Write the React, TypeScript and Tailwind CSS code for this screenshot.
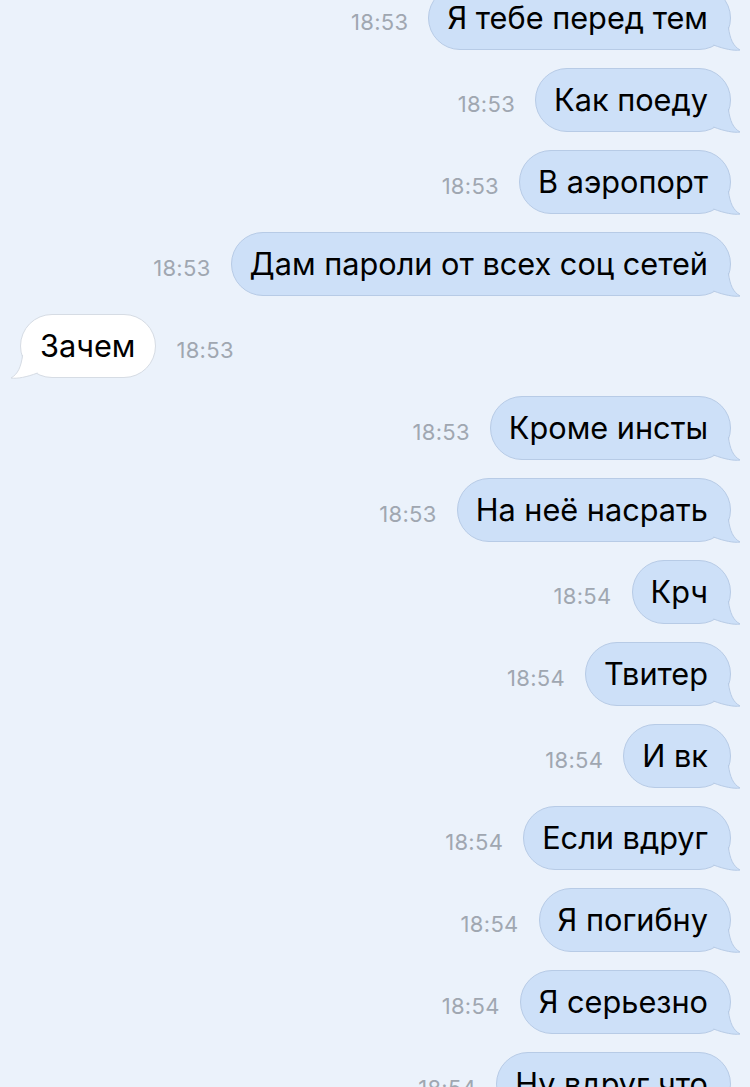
import React from "react";

type Msg = { text: string; time: string; out: boolean };

const MESSAGES: Msg[] = [
  { text: "Я тебе перед тем", time: "18:53", out: true },
  { text: "Как поеду", time: "18:53", out: true },
  { text: "В аэропорт", time: "18:53", out: true },
  { text: "Дам пароли от всех соц сетей", time: "18:53", out: true },
  { text: "Зачем", time: "18:53", out: false },
  { text: "Кроме инсты", time: "18:53", out: true },
  { text: "На неё насрать", time: "18:53", out: true },
  { text: "Крч", time: "18:54", out: true },
  { text: "Твитер", time: "18:54", out: true },
  { text: "И вк", time: "18:54", out: true },
  { text: "Если вдруг", time: "18:54", out: true },
  { text: "Я погибну", time: "18:54", out: true },
  { text: "Я серьезно", time: "18:54", out: true },
  { text: "Ну вдруг что", time: "18:54", out: true },
];

function Tail({ fill, stroke, left }: { fill: string; stroke: string; left?: boolean }) {
  return (
    <svg
      viewBox="-32 -32 44 36"
      className={
        left
          ? "absolute left-[-12px] bottom-[-4px] w-[44px] h-[36px] -scale-x-100"
          : "absolute right-[-12px] bottom-[-4px] w-[44px] h-[36px]"
      }
    >
      <path d="M-2,-22 C0,-10 3,-3 10,1 C4,2 -6,0 -16,-4 L-20,-20 Z" fill={fill} />
      <path
        d="M-1.6,-22 C0,-10 3,-3 10,1 C4,2 -6,0 -16.5,-4"
        fill="none"
        stroke={stroke}
        strokeWidth="1"
      />
    </svg>
  );
}

function Time({ t }: { t: string }) {
  return (
    <span className="mt-[9px] text-[22px] text-[#a0a7b1] font-['Inter',sans-serif] tracking-[0.3px]">
      {t}
    </span>
  );
}

function Row({ m }: { m: Msg }) {
  if (m.out) {
    return (
      <div className="h-[64px] shrink-0 flex items-center justify-end gap-[20px] pr-[19px]">
        <Time t={m.time} />
        <div className="relative h-[64px] flex items-center pl-[18px] pr-[22px] rounded-[32px] bg-[#cde0f8] border border-[#b7cbe6]">
          <span className="text-[30.7px] text-black font-['Inter',sans-serif] leading-none whitespace-nowrap">
            {m.text}
          </span>
          <Tail fill="#cde0f8" stroke="#b7cbe6" />
        </div>
      </div>
    );
  }
  return (
    <div className="h-[64px] shrink-0 flex items-center justify-start gap-[20px] pl-[20px]">
      <div className="relative h-[64px] flex items-center pl-[19px] pr-[20px] rounded-[32px] bg-white border border-[#d6dce4]">
        <span className="text-[30.7px] text-black font-['Inter',sans-serif] leading-none whitespace-nowrap">
          {m.text}
        </span>
        <Tail fill="#ffffff" stroke="#d6dce4" left />
      </div>
      <Time t={m.time} />
    </div>
  );
}

export default function App() {
  return (
    <div className="w-[750px] h-[1087px] overflow-hidden bg-[#ebf2fb]">
      <div className="-mt-[14px] flex flex-col gap-[18px]">
        {MESSAGES.map((m, i) => (
          <Row key={i} m={m} />
        ))}
      </div>
    </div>
  );
}
